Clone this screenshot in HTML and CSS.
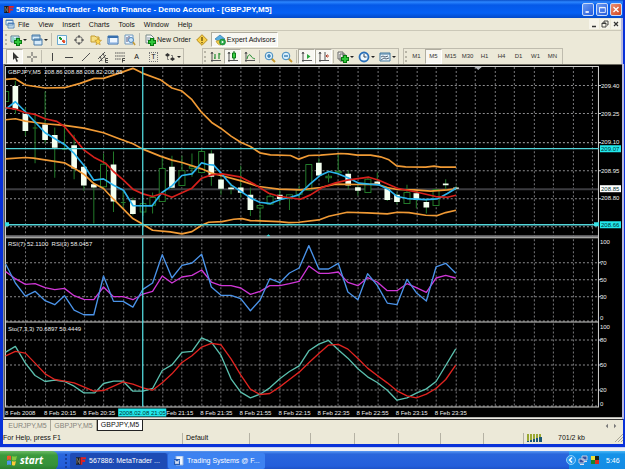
FILE: index.html
```html
<!DOCTYPE html>
<html lang="en">
<head>
<meta charset="utf-8">
<title>567886: MetaTrader - North Finance</title>
<link rel="stylesheet" href="styles.css">
</head>
<body>
<svg class="defs" aria-hidden="true">
  <symbol id="nf" viewBox="0 0 11 8"><path d="M0 0h6v8H0z" fill="#181818"/><path d="M1 7V1l3 6V1" fill="none" stroke="#777"/><path d="M6 8V1h5M6 4h4" fill="none" stroke="#e02222" stroke-width="2"/></symbol>
  <symbol id="plus" viewBox="0 0 8 8"><path d="M4 0v8M0 4h8" stroke="#087a10" stroke-width="4"/><path d="M4 1v6M1 4h6" stroke="#2fc63a" stroke-width="2"/></symbol>
</svg>
<div class="window">
  <header class="titlebar">
    <svg class="logo"><use href="#nf"/></svg>
    <h1>567886: MetaTrader - North Finance - Demo Account - [GBPJPY,M5]</h1>
    <div class="caption">
      <button aria-label="Minimize"><svg viewBox="0 0 12 12"><path d="M3 9h4" stroke="#fff" stroke-width="2"/></svg></button>
      <button aria-label="Maximize"><svg viewBox="0 0 12 12"><path d="M3 3.5h7v6H3zM3 4h7" fill="none" stroke="#fff"/></svg></button>
      <button class="close" aria-label="Close"><svg viewBox="0 0 12 12"><path d="M3 3l6 6M9 3l-6 6" stroke="#fff" stroke-width="1.6"/></svg></button>
    </div>
  </header>
  <nav class="menubar">
    <svg class="doc" viewBox="0 0 10 10"><path d="M1 1h7v5H1zM3 4h6v5H3z" fill="#e6f2fb" stroke="#5688b8"/><path d="M3 4.5h6M1 1.5h7" stroke="#4c7eb8"/><path d="M4 7h4" stroke="#88b6d5"/></svg>
    <button>File</button><button>View</button><button>Insert</button><button>Charts</button><button>Tools</button><button>Window</button><button>Help</button>
    <div class="mdi">
      <button aria-label="Minimize chart"><svg viewBox="0 0 10 10"><path d="M3 7.5h4" stroke="#333" stroke-width="1.5"/></svg></button>
      <button aria-label="Restore chart"><svg viewBox="0 0 10 10"><path d="M4 4V2h4v4H7M2 4h4v4H2zM2 4.5h4" fill="none" stroke="#333" stroke-width=".9"/></svg></button>
      <button aria-label="Close chart"><svg viewBox="0 0 10 10"><path d="M3 3l4 4M7 3L3 7" stroke="#333" stroke-width="1.2"/></svg></button>
    </div>
  </nav>
  <div class="toolbar main">
    <i class="grip"></i>
    <button class="wide" aria-label="New chart"><svg viewBox="0 0 12 12"><path d="M1 2h8v6H1z" fill="#dff0fb" stroke="#5a8292"/><path d="M3 3v4M5 4v3M7 3v3" stroke="#4b9"/><use href="#plus" x="4" y="4" width="8" height="8"/></svg><i class="arrow"></i></button>
    <button class="wide" aria-label="Profiles"><svg viewBox="0 0 12 12"><path d="M1 1h8v5H1zM3 5h8v6H3z" fill="#d8ecfa" stroke="#487ba8"/><path d="M3 6h8M1 2h8" stroke="#487ba8"/></svg><i class="arrow"></i></button>
    <i class="sep"></i>
    <button aria-label="Market watch"><svg viewBox="0 0 12 12"><path d="M1.500 1.500h9v9h-9z" fill="#f2fbff" stroke="#6aa8d0"/><path d="M3 4l1-1 2 2-1 1z" fill="#21952b" stroke="#21952b"/><path d="M6 7l2-1 1 2-1 1z" fill="#e04b27" stroke="#e04b27"/></svg></button>
    <button aria-label="Data window"><svg viewBox="0 0 12 12"><circle cx="6" cy="6" r="3.500" fill="none" stroke="#666"/><path d="M6 1v3M6 8v3M1 6h3M8 6h3" stroke="#444"/></svg></button>
    <button aria-label="Navigator"><svg viewBox="0 0 12 12"><path d="M1 2h4l1 1h3v5H1z" fill="#f6df83" stroke="#c49c30"/><path d="M8 4l1 2.200 2.500.2-2 1.700.7 2.600L8 9.500l-2 1.200.6-2.600-1.800-1.700L7 6.200z" fill="#ffd84e" stroke="#b98a1c" stroke-width=".6"/></svg></button>
    <button aria-label="Terminal"><svg viewBox="0 0 12 12"><path d="M1 2h10v8H1z" fill="#eef6ff" stroke="#376fae"/><path d="M1 3h10" stroke="#376fae" stroke-width="2"/><path d="M2 9h8M2.500 4v5" stroke="#7aa6dc"/></svg></button>
    <button aria-label="Strategy tester"><svg viewBox="0 0 12 12"><path d="M1 1h8v9H1z" fill="#eef6ff" stroke="#7099bd"/><path d="M3 3v5M5 2v3" stroke="#557"/><circle cx="7" cy="6" r="2.500" fill="#c9e4f8" stroke="#4e86bd"/><path d="M9 8l2 3" stroke="#c39a35" stroke-width="1.500"/></svg></button>
    <i class="sep"></i>
    <button class="labelled order"><svg viewBox="0 0 12 12"><path d="M2 1h5l3 3v5H2z" fill="#f7f7f7" stroke="#788"/><path d="M3 4h4M3 6h3" stroke="#89a"/><use href="#plus" x="4" y="4" width="8" height="8"/></svg>New Order</button>
    <button aria-label="Alerts"><svg viewBox="0 0 12 12"><path d="M6 .7L11.300 6 6 11.300.7 6z" fill="#f7d04a" stroke="#b98d1c"/><path d="M6 3v4M6 8v1.300" stroke="#664a00" stroke-width="1.300"/></svg></button>
    <button class="labelled pressed expert"><svg viewBox="0 0 12 12"><path d="M1 5l5-4 5 4-5 3z" fill="#59ade0" stroke="#2b78ad" stroke-width=".7"/><path d="M2 7c1 3 3 4 5 4V6z" fill="#f0cb48" stroke="#b99021" stroke-width=".6"/><circle cx="8.500" cy="8" r="3" fill="#24a842" stroke="#137528" stroke-width=".6"/><path d="M7.700 6.500v3l2.300-1.500z" fill="#fff"/></svg>Expert Advisors</button>
  </div>
  <div class="toolbar tools">
    <div class="group">
      <button class="pressed" aria-label="Cursor"><svg viewBox="0 0 12 12"><path d="M4 1v8l2-2 1.500 4 1.500-.7L7.500 7H10z" fill="#333"/></svg></button>
      <button aria-label="Crosshair"><svg viewBox="0 0 12 12"><path d="M6 1v4M6 7v4M1 6h4M7 6h4" stroke="#555"/></svg></button>
      <i class="sep"></i>
      <button aria-label="Vertical line"><svg viewBox="0 0 12 12"><path d="M6.500 2v8" stroke="#444"/></svg></button>
      <button aria-label="Horizontal line"><svg viewBox="0 0 12 12"><path d="M2 6.500h8" stroke="#444"/></svg></button>
      <button aria-label="Trend line"><svg viewBox="0 0 12 12"><path d="M2 10l8-8" stroke="#555"/></svg></button>
      <button aria-label="Channel"><svg viewBox="0 0 12 12"><path d="M1 8l7-7M2 11l7-7M3 5l2 5M6 2l2 5" fill="none" stroke="#444" stroke-width=".9"/><path d="M11 7.500H8.500v4H11M8.500 9.500H11" fill="none" stroke="#222" stroke-width=".8"/></svg></button>
      <button aria-label="Fibonacci"><svg viewBox="0 0 12 12"><path d="M1 2h10M1 5h10M1 8h6" stroke="#555" stroke-dasharray="1.500 .6"/><path d="M11 7.500H8.500v4M8.500 9.500H11" fill="none" stroke="#222" stroke-width=".8"/></svg></button>
      <button aria-label="Text">A</button>
      <button aria-label="Text label"><span class="dotted">T</span></button>
      <button class="wide" aria-label="Arrows"><svg viewBox="0 0 12 12"><path d="M1 4l2.500-2L6 4 3.500 6zM6 8l2.500-2L11 8l-2.500 2z" fill="#333"/><path d="M3.500 6v2.500H5M8.500 6V4.500H7" fill="none" stroke="#555" stroke-width=".7"/></svg><i class="arrow"></i></button>
    </div>
    <div class="group charts">
      <i class="grip"></i>
      <button aria-label="Bar chart"><svg viewBox="0 0 12 12"><path d="M2 1v10M1 9.500h10M1 3l1-2 1 2" fill="none" stroke="#555"/><path d="M5 3v5M5 7H4M9 2v6M9 3h1.500" fill="none" stroke="#208c30" stroke-width="1.200"/></svg></button>
      <button class="pressed" aria-label="Candlesticks"><svg viewBox="0 0 12 12"><path d="M2 1v10M1 9.500h10M1 3l1-2 1 2" fill="none" stroke="#555"/><path d="M7 0v9" stroke="#0b6d18"/><path d="M5.500 2h3v5h-3z" fill="#3dce45" stroke="#0b7a18"/></svg></button>
      <button aria-label="Line chart"><svg viewBox="0 0 12 12"><path d="M2 1v10M1 9.500h10M1 3l1-2 1 2" fill="none" stroke="#555"/><path d="M3 8c1-5 3-5 4-3 1 2 2 2 4 3" fill="none" stroke="#208c30"/></svg></button>
      <i class="sep"></i>
      <button aria-label="Zoom in"><svg viewBox="0 0 12 12"><path d="M7.500 7.500l3.500 3.500" stroke="#c7982d" stroke-width="2"/><circle cx="5" cy="5" r="3.800" fill="#d7eefb" stroke="#3f88bd"/><path d="M3 5h4M5 3v4" stroke="#1d6ca8" stroke-width="1.200"/></svg></button>
      <button aria-label="Zoom out"><svg viewBox="0 0 12 12"><path d="M7.500 7.500l3.500 3.500" stroke="#c7982d" stroke-width="2"/><circle cx="5" cy="5" r="3.800" fill="#d7eefb" stroke="#3f88bd"/><path d="M3 5h4" stroke="#1d6ca8" stroke-width="1.200"/></svg></button>
      <i class="sep"></i>
      <button class="pressed" aria-label="Auto scroll"><svg viewBox="0 0 12 12"><path d="M2 1v10M1 9.500h10M1 3l1-2 1 2" fill="none" stroke="#555"/><path d="M6 3v5l3.500-2.500z" fill="#27a53a"/></svg></button>
      <button class="pressed" aria-label="Chart shift"><svg viewBox="0 0 12 12"><path d="M2 1v10M1 9.500h10M1 3l1-2 1 2M7 1v8" fill="none" stroke="#555"/><path d="M11 5H8l1.500-1.500M8 5l1.500 1.500" fill="none" stroke="#b23b26"/></svg></button>
      <i class="sep"></i>
      <button class="wide" aria-label="Indicators"><svg viewBox="0 0 12 12"><path d="M1 1h5v7H1zM3 3h5v7H3z" fill="#f3f3ef" stroke="#666"/><use href="#plus" x="4" y="4" width="8" height="8"/></svg><i class="arrow"></i></button>
      <button class="wide" aria-label="Periods"><svg viewBox="0 0 12 12"><circle cx="6" cy="6" r="4.500" fill="#eff8ff" stroke="#2b70b8" stroke-width="1.800"/><path d="M6 3v3h2.500" fill="none" stroke="#345"/></svg><i class="arrow"></i></button>
      <button class="wide" aria-label="Templates"><svg viewBox="0 0 12 12"><path d="M1 2h10v8H1z" fill="#e8f4fb" stroke="#43799e"/><path d="M1 3h10" stroke="#43799e"/><path d="M2 6l2-1 2 1 3-1M2 9l3-2 2 1 3-1" fill="none" stroke="#567"/></svg><i class="arrow"></i></button>
    </div>
    <div class="group periods">
      <i class="grip"></i>
      <button>M1</button><button class="pressed">M5</button><button>M15</button><button>M30</button><button>H1</button><button>H4</button><button>D1</button><button>W1</button><button>MN</button>
    </div>
  </div>
  <main>
    <svg class="chart" viewBox="4 64 617 354" role="img" aria-label="GBPJPY M5 price, RSI and stochastic">
      <path d="M4 64h617v353H4z" fill="#000"/>
      <path d="M4 64h617v1H4z" fill="#6c6a60"/><path d="M4 64h1v353H4z" fill="#555"/>
      <g class="grid">
        <path d="M25.500 67V406M45.500 67V406M64.500 67V406M84.500 67V406M103.500 67V406M123.500 67V406M162.500 67V406M181.500 67V406M201.500 67V406M220.500 67V406M240.500 67V406M259.500 67V406M279.500 67V406M298.500 67V406M318.500 67V406M337.500 67V406M357.500 67V406M377.500 67V406M396.500 67V406M416.500 67V406M435.500 67V406M455.500 67V406M474.500 67V406M494.500 67V406M513.500 67V406M533.500 67V406M552.500 67V406M572.500 67V406M591.500 67V406"/>
        <path class="horizontal" d="M6 85.500H597M6 113.500H597M6 142.500H597M6 170.500H597M6 198.500H597M6 226.500H597M6 262.500H597M6 279.500H597M6 296.500H597M6 320.500H597M6 339.500H597M6 364.500H597M6 389.500H597M6 405.500H597"/>
      </g>
      <path d="M6 189h592" stroke="#3c3c40" stroke-width="2"/>
      <path d="M5 235h593v2H5z" fill="#77777a"/>
      <path d="M5 66.500H597.500V406.500H5.500V66M5 237.500H598M5 321.500H598M598 85.500h2M598 113.500h2M598 142.500h2M598 170.500h2M598 198.500h2M598 262.500h2M598 279.500h2M598 296.500h2M598 339.500h2M598 364.500h2M598 389.500h2" fill="none" stroke="#d2d2cf"/>
      <path d="M474 67h7l-3.500 3z" fill="#b0b4b8"/>
      <g transform="translate(0 64) scale(.33333)" fill="none" stroke-linejoin="round">
        <path class="wick" d="M46 50V150M76 130V215M105 150V297M98 192H112M135 82V238M164 190V341M193 190V258M186 255H200M222 212V345M251 300V380M281 355V478M310 268V300M310 368V373M340 262V443M369 378V430M362 415H376M398 400V453M428 412V455M457 385V400M457 423V448M486 280V313M515 275V374M545 275V320M575 268V338M604 255V262M633 258V365M662 340V392M692 358V390M721 305V400M750 370V455M779 431V476M809 388V396M838 375V420M867 403V437M896 365V404M955 282V334M984 328V355M1013 270V328M1043 320V375M1072 362V395M1102 338V345M1130 325V365M1160 370V410M1189 385V420M1219 362V385M1247 378V432M1277 402V448M1335 345V375M1366 365V376"/>
        <path class="hollow" d="M18 82h8v30h-8M301 300h18v68h-18zM420 418h17v25h-17zM449 400h17v23h-17zM477 313h18v99h-18zM536 320h18v44h-18zM567 307h17v5h-17zM595 262h18v63h-18zM770 424h18v7h-18zM800 396h18v24h-18zM858 392h18v11h-18zM887 378h18v12h-18zM916 301h18v77h-18zM976 336h17v5h-17zM1005 322h17v4h-17zM1093 345h18v40h-18zM1210 385h18v33h-18zM1297 376h18v48h-18z"/>
        <path class="filled" d="M46 66V136M76 150V201M135 181V228M164 213V251M222 243V313M251 308V364M281 360V370M340 301V412M398 408V449M515 308V371M633 268V338M662 346V374M692 370V375M721 370V386M750 392V437M838 392V404M955 296V334M1043 329V364M1072 369V380M1130 352V360M1160 374V407M1189 392V413M1247 387V407M1277 413V430M1335 358V363M1366 370V374"/>
        <g class="bands">
          <path d="M17 46 46 44 76 63 135 72 193 71 240 58 282 43 310 43 355 28 398 13 428 28 480 47 515 72 545 81 575 107 604 145 634 175 662 193 692 216 722 235 750 247 778 266 810 272 870 274 895 285 925 274 960 273 1020 268 1042 269 1070 273 1110 273 1140 278 1165 287 1188 305 1215 308 1275 309 1300 306 1320 309 1366 309"/>
          <path d="M17 167 46 164 76 171 135 179 193 184 251 192 310 206 355 223 398 239 428 255 480 276 515 288 545 295 604 314 634 327 662 334 722 350 775 367 835 375 900 377 960 370 1005 360 1070 361 1130 360 1160 370 1190 376 1240 377 1290 381 1340 377 1366 374"/>
          <path d="M17 284 76 280 100 282 193 296 222 312 251 330 281 358 310 373 340 405 398 463 428 480 457 498 510 503 545 509 575 502 604 483 625 474 665 472 700 465 725 463 750 469 835 472 865 475 895 474 955 467 985 456 1040 444 1100 446 1160 449 1190 444 1225 445 1275 453 1310 454 1335 445 1366 438"/>
        </g>
        <path class="average" d="M17 135 46 113 76 143 135 206 193 241 222 268 251 303 281 348 310 344 340 363 370 378 398 424 455 425 485 385 515 365 545 334 575 329 604 296 622 301 640 303 662 327 692 362 722 382 750 401 778 414 810 418 840 406 870 399 895 392 930 358 960 333 985 322 1010 328 1042 341 1075 357 1105 360 1135 362 1165 377 1190 397 1220 403 1275 406 1310 404 1340 388 1366 372"/>
        <path class="average slow" d="M17 131 46 135 76 146 105 151 135 164 170 172 193 187 222 222 251 257 281 279 316 297 340 322 370 348 398 375 428 389 457 397 485 388 515 399 575 372 604 342 634 332 665 329 722 339 765 362 805 387 835 396 900 405 930 392 965 370 1005 356 1040 348 1105 339 1135 348 1190 372 1250 384 1305 397 1340 399 1366 393"/>
      </g>
      <g class="oscillators" transform="translate(0 235) scale(.33333)">
        <path class="rsi-slow" d="M17 109 46 130 76 147 105 145 135 157 164 163 193 159 222 181 251 192 281 193 310 155 340 184 369 184 398 193 428 176 457 168 486 122 515 143 545 125 575 120 604 104 633 140 662 151 692 151 721 158 750 177 779 168 808 151 838 151 867 145 896 138 925 92 955 114 984 114 1013 110 1042 141 1072 151 1101 127 1130 140 1160 166 1189 166 1219 145 1247 157 1277 171 1306 128 1335 120 1365 128"/>
        <path class="rsi-fast" d="M17 86 46 143 76 182 105 168 135 196 164 208 193 181 222 224 251 238 281 238 310 122 340 198 369 198 398 215 428 162 457 143 486 58 515 128 545 90 575 83 604 57 633 155 662 180 692 180 721 190 750 226 779 194 808 130 838 142 867 113 896 98 925 31 955 101 984 101 1013 84 1042 170 1072 193 1101 115 1130 150 1160 203 1189 208 1219 132 1247 172 1277 197 1306 95 1335 84 1365 114"/>
        <path class="sto-main" d="M17 350 46 333 76 383 105 420 135 438 164 434 193 438 222 452 251 472 284 472 310 444 340 437 369 437 398 467 428 467 457 459 486 405 515 388 545 351 575 348 604 307 633 320 662 360 692 430 721 470 750 487 779 476 808 457 838 430 867 408 896 391 925 346 955 326 984 315 1013 343 1042 368 1072 400 1101 424 1130 441 1160 464 1189 494 1219 487 1247 473 1277 460 1306 438 1335 390 1365 340"/>
        <path class="sto-signal" d="M17 361 46 348 76 353 105 383 135 415 164 432 193 437 222 442 251 454 281 467 310 465 369 439 398 446 428 457 457 464 486 442 515 415 545 381 575 361 604 335 633 324 662 328 692 370 721 418 750 461 779 477 808 474 838 454 867 432 896 410 925 382 955 354 984 329 1013 327 1042 341 1072 369 1101 398 1130 420 1160 442 1189 466 1219 481 1247 487 1277 476 1306 459 1335 432 1365 389"/>
      </g>
      <path d="M6 148.500H598M6 224.500H598M142.500 67V235M142.500 238V406" stroke="#52d5da" stroke-width="1.300"/>
      <path d="M5 222h4v4H5zM593 222h5v4h-5zM266 236l2-2 2 2z" fill="#38e0e4"/>
      <text x="8" y="74">GBPJPY,M5&#160; 208.86 208.88 208.82 208.85</text>
      <text x="8" y="246">RSI(7) 52.1100&#160; RSI(3) 58.0457</text>
      <text x="8" y="331">Sto(7,3,3) 70.6897 50.4449</text>
      <g>
        <text x="600" y="88">209.40</text><text x="600" y="116">209.25</text><text x="600" y="144">209.10</text><text x="600" y="173">208.95</text><text x="600" y="200">208.80</text>
        <path d="M599 145h21v7h-21zM599 221h21v7h-21zM118 408h48v8h-48z" fill="#22e8ec"/><path d="M599 185h21v7h-21z" fill="#fff"/>
        <g class="tag"><text x="600" y="151">209.07</text><text x="600" y="191">208.85</text><text x="600" y="227">208.66</text><text x="119" y="414">2008.02.08 21:05</text></g>
        <text x="599" y="244">100</text><text x="599" y="265">70</text><text x="599" y="282">50</text><text x="599" y="299">30</text><text x="599" y="320">0</text>
        <text x="599" y="329">100</text><text x="599" y="342">80</text><text x="599" y="367">50</text><text x="599" y="391">20</text><text x="599" y="405">0</text>
      </g>
      <g>
        <text x="5" y="414">8 Feb 2008</text><text x="44" y="414">8 Feb 20:15</text><text x="83" y="414">8 Feb 20:35</text><text x="166" y="414">Feb 21:15</text><text x="200" y="414">8 Feb 21:35</text><text x="239" y="414">8 Feb 21:55</text><text x="278" y="414">8 Feb 22:15</text><text x="317" y="414">8 Feb 22:35</text><text x="356" y="414">8 Feb 22:55</text><text x="395" y="414">8 Feb 23:15</text><text x="434" y="414">8 Feb 23:35</text>
      </g>
      <path d="M4 417.500h617" stroke="#eee"/>
    </svg>
  </main>
  <nav class="tabs">
    <button>EURJPY,M5</button><button>GBPJPY,M5</button><button class="active">GBPJPY,M5</button>
    <svg class="scroll" viewBox="0 0 16 8"><path d="M4 1v6L1 4zM12 1v6l3-3z" fill="#777"/></svg>
  </nav>
  <footer class="status">
    <span>For Help, press F1</span><span>Default</span><span></span><span></span><span></span><span></span><span></span><span></span>
    <span class="traffic"><svg viewBox="0 0 15 8"><path d="M0 4h15" stroke="#9aa832" stroke-width="8" stroke-dasharray="2 1"/><path d="M0 7h2v1H0zM3 6h2v2H3zM6 5h2v3H6zM9 4h2v4H9zM12 3h3v5h-3z" fill="#1b5874"/></svg>701/2 kb
      <svg class="resize" viewBox="0 0 8 8"><path d="M0 8l8-8M3 8l5-5M6 8l2-2" stroke="#aaa696"/></svg></span>
  </footer>
</div>
<div class="desktop"></div>
<footer class="taskbar">
  <button class="start"><svg viewBox="0 0 12 12"><path d="M1 2q2-1 4 0v4q-2-1-4 0z" fill="#f0572d"/><path d="M6 2q2 1 5 0l-1 4q-2 1-4 0z" fill="#82c93e"/><path d="M1 7q2-1 4 0v4q-2-1-4 0z" fill="#4e94ef"/><path d="M6 7q2 1 4 0l-1 4q-1 1-3 0z" fill="#fbc938"/></svg>start</button>
  <i class="dots"></i>
  <button class="task current"><svg class="logo"><use href="#nf"/></svg>567886: MetaTrader ...</button>
  <button class="task"><svg viewBox="0 0 10 10"><path d="M2 0h7v9H2z" fill="#eef5ff" stroke="#9cb6df"/><path d="M0 3h6v6H0z" fill="#245bb5"/><path d="M1 4l1 4 1-3 1 3 1-4" fill="none" stroke="#fff" stroke-width=".8"/></svg>Trading Systems @ F...</button>
  <div class="tray">
    <button class="expand" aria-label="Show hidden icons"><svg viewBox="0 0 10 10"><circle cx="5" cy="5" r="4.500" fill="#2f9cf0" stroke="#8fd0fa"/><path d="M6 2.500L3.500 5 6 7.500" fill="none" stroke="#fff" stroke-width="1.400"/></svg></button>
    <svg viewBox="0 0 10 10"><path d="M4 1h5v4H4zM1 4h5v4H1z" fill="#3550a0" stroke="#c3cce0"/><path d="M2 9.500h4M6 6.500h3" stroke="#dde"/></svg>
    <svg viewBox="0 0 10 10"><path d="M1 1h4v4H1z" fill="#e8df39"/><path d="M5 1h4v4H5z" fill="#172117"/><path d="M1 5h4v4H1z" fill="#17852c"/><path d="M5 5h4v4H5z" fill="#d92c20"/></svg>
    <time>5:46</time>
  </div>
</footer>
</body>
</html>
```
FILE: styles.css
```css
* { box-sizing: border-box; }
body { margin: 0; background: #245edb; font: 7px/9px "Liberation Sans", sans-serif; color: #111; }
button { margin: 0; padding: 0; border: 0; background: none; color: inherit; font: inherit; white-space: nowrap; }
svg { display: block; flex: none; }
.defs { width: 0; height: 0; position: absolute; }
.window { border: solid #0831d9; border-width: 0 2px 3px 3px; background: #ece9d8; }
.titlebar { display: flex; align-items: center; gap: 2px; height: 18px; margin-left: -3px; padding: 1px 1px 0 4px; background: linear-gradient(#0a4fc8, #2c86ff 2px, #0559e8 5px, #0560f4 13px, #0349c8); color: #fff; }
.logo { width: 10px; height: 7px; }
h1 { margin: 0; font: bold 8px/12px "Liberation Sans", sans-serif; white-space: nowrap; }
.caption { display: flex; gap: 2px; margin-left: auto; }
.caption button { width: 12px; height: 13px; border: 1px solid #c9daf8; border-radius: 2px; background: linear-gradient(135deg, #6c9bf2, #245bdc); }
.caption .close { background: linear-gradient(135deg, #ee9070, #d04520); }
.caption svg { width: 10px; height: 11px; }
.menubar { display: flex; align-items: center; gap: 9px; height: 13px; padding-left: 2px; border-bottom: 1px solid #cbc8b8; border-right: 2px solid #b9b9dd; }
.doc { width: 10px; height: 10px; margin-right: -6px; }
.mdi { display: flex; gap: 1px; margin-left: auto; }
.mdi button { background: #f6f4ea; }
.mdi svg { width: 10px; height: 10px; }
.toolbar { display: flex; align-items: center; border-right: 2px solid #b9b9dd; }
.toolbar button { display: flex; align-items: center; justify-content: center; width: 17px; height: 15px; border: 1px solid transparent; }
.toolbar button svg { width: 12px; height: 12px; }
.toolbar .wide { width: 21px; }
.toolbar .pressed { background: #f8f7f2; border-color: #b0ad9f #fff #fff #b0ad9f; }
.arrow { margin-left: 1px; border: 2px solid transparent; border-top-color: #222; border-bottom: 0; }
.grip { width: 2px; height: 11px; margin: 0 1px; border-left: 2px dotted #b8b5a6; }
.sep { width: 1px; height: 13px; margin: 0 1px; background: #c0bdaf; }
.main { height: 17px; padding-left: 1px; }
.toolbar .labelled { width: auto; gap: 1px; padding: 0 2px; }
.tools { height: 16px; }
.group { display: flex; align-items: center; height: 16px; border: solid #bfbcae; border-width: 1px 1px 0 0; padding-left: 3px; }
.charts { margin-left: 18px; padding-left: 0; border-left-width: 1px; }
.periods { margin-left: 4px; padding: 0 1px 0 0; border-left-width: 1px; font-size: 6px; color: #333; }
.dotted { padding: 0 1px; border: 1px dotted #777; line-height: 8px; }
.chart { width: 100%; height: auto; }
main { border-left: 1px solid #8b8f98; border-right: 2px solid #b9b9dd; margin-right: -1px; }
.chart text { fill: #eee; font: 6px "Liberation Sans", sans-serif; }
.chart .tag text { fill: #033; }
.grid { fill: none; stroke: #77777a; stroke-dasharray: 2 2; }
.grid .horizontal { stroke: #8c8c8e; }
.wick, .hollow { stroke: #227a2a; stroke-width: 3; }
.hollow { fill: #000; }
.filled { stroke: #f4fff0; stroke-width: 17; }
.bands { stroke: #f09a35; stroke-width: 5; }
.average { stroke: #2bb4ee; stroke-width: 5; }
.average.slow { stroke: #d6201c; }
.oscillators { fill: none; stroke-width: 4; stroke-linejoin: round; }
.rsi-fast { stroke: #4b93e8; }
.rsi-slow { stroke: #cf36d6; }
.sto-main { stroke: #5bbfae; }
.sto-signal { stroke: #e02420; }
.tabs { display: flex; height: 14px; padding: 0 0 2px 2px; border-top: 1px solid #333; color: #85837a; }
.tabs button { width: 46px; height: 11px; border-right: 1px solid #aaa798; }
.tabs .active { border: 1px solid #222; border-top: 0; background: #fff; color: #111; }
.scroll { width: 16px; height: 6px; margin: 3px 4px 0 auto; }
.status { display: grid; grid-template-columns: 179fr 67fr 61fr 44fr 44fr 42fr 43fr 40fr 100fr; height: 11px; }
.status span { padding-left: 3px; border-left: 1px solid #b5b2a4; line-height: 10px; white-space: nowrap; }
.status span:first-child { border: 0; padding: 0; }
.status .traffic { display: flex; align-items: center; gap: 16px; }
.traffic svg { width: 15px; height: 8px; }
.traffic .resize { width: 8px; margin-left: auto; }
.desktop { height: 4px; background: #eceff7; border-top: 1px solid #c8d0ec; }
.taskbar { display: flex; align-items: stretch; height: 19px; background: linear-gradient(#5a9af2, #2a66dc 3px, #245edb 15px, #1c4fc0); color: #fff; }
.taskbar button { display: flex; align-items: center; gap: 3px; }
.taskbar .start { width: 58px; gap: 2px; padding-left: 6px; border-radius: 0 6px 6px 0; background: linear-gradient(#6dbb66, #3c9a3c 4px, #35913a 14px, #287a2c); font: italic bold 10px/16px "Open Sans", sans-serif; }
.start svg { width: 12px; height: 12px; }
.dots { height: 14px; margin: 3px 3px 0 7px; border-left: 2px dotted #163f9f; }
.task { flex: 0 1 97px; margin: 2px 1px 1px 0; background: #3d82f1; }
.taskbar .task { padding-left: 6px; border-radius: 2px; }
.task.current { background: #1d4bb5; }
.task svg { width: 10px; height: 10px; }
.tray { display: flex; align-items: center; gap: 2px; width: 56px; margin-left: auto; background: linear-gradient(#4db8f5, #1592e8 3px, #148be4); }
.tray svg { width: 10px; height: 10px; }
.expand { margin-left: -3px; }
.tray time { margin-left: 4px; }
```
